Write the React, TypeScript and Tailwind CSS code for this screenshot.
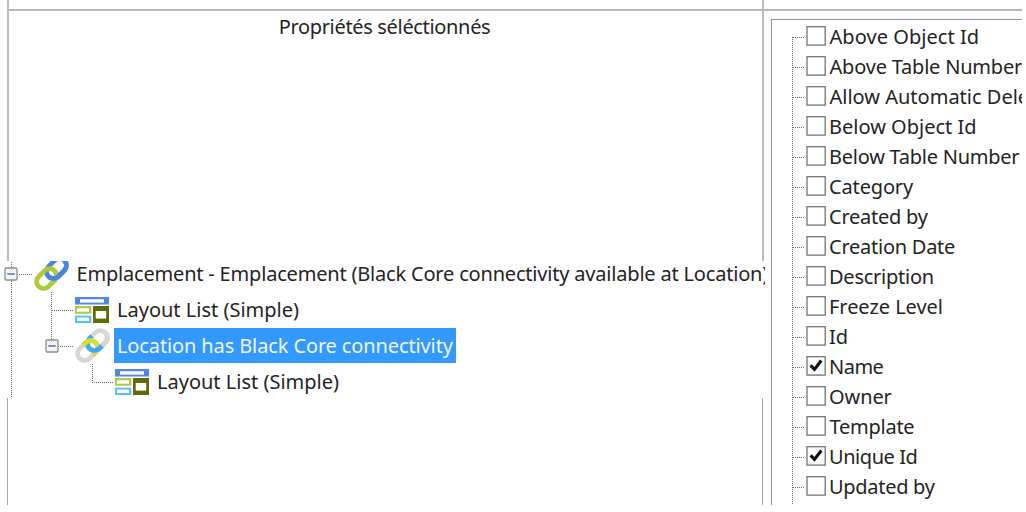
import type { ReactNode } from "react";

type Segment = [number, number, number, number];

function Dots({ width, height, lines }: { width: number; height: number; lines: Segment[] }) {
  return (
    <svg width={width} height={height} className="block shrink-0" fill="none" stroke="#6c6c6c" strokeDasharray="1 1">
      {lines.map(([x1, y1, x2, y2], i) => (
        <path key={i} d={`M${x1} ${y1}L${x2} ${y2}`} />
      ))}
    </svg>
  );
}

function Expander() {
  return (
    <svg width="14" height="14" viewBox="0 0 14 14" className="block shrink-0">
      <rect x="1" y="1" width="12" height="12" rx="1.2" fill="#f4f4f4" stroke="#8c8c8c" strokeWidth="1.3" />
      <path d="M3.3 7h7.4" stroke="#4262b4" strokeWidth="1.4" />
    </svg>
  );
}

const LOWER = "rotate(-45 12.6 22.6)";
const UPPER = "rotate(-45 22.4 12.6)";

function LowerLink({ color, clip }: { color: string; clip?: string }) {
  return (
    <g clipPath={clip}>
      <rect x="1.35" y="15.6" width="22.5" height="14" rx="7" transform={LOWER} fill="none" stroke={color} strokeWidth="4.8" />
    </g>
  );
}

function UpperLink({ color, clip }: { color: string; clip?: string }) {
  return (
    <g clipPath={clip}>
      <rect x="11.15" y="5.6" width="22.5" height="14" rx="7" transform={UPPER} fill="none" stroke={color} strokeWidth="4.8" />
    </g>
  );
}

function LinkIcon() {
  return (
    <svg width="36" height="36" viewBox="0 0 36 36" className="block shrink-0">
      <clipPath id="link-front">
        <path d="M36 0V36H0Z" />
      </clipPath>
      <UpperLink color="#4a86e0" />
      <LowerLink color="#aecb3c" />
      <UpperLink color="#4a86e0" clip="url(#link-front)" />
    </svg>
  );
}

function MutedLinkIcon() {
  return (
    <svg width="36" height="36" viewBox="0 0 36 36" className="block shrink-0">
      <clipPath id="muted-upper">
        <path d="M-20 -29L45 36H-20Z" />
      </clipPath>
      <clipPath id="muted-lower">
        <path d="M-9 0L27 36H50V-10H-9Z" />
      </clipPath>
      <clipPath id="muted-front">
        <path d="M36 0V36H0Z" />
      </clipPath>
      <UpperLink color="#d6d6d6" />
      <UpperLink color="#3fa9f5" clip="url(#muted-upper)" />
      <LowerLink color="#d6d6d6" />
      <LowerLink color="#cfe22c" clip="url(#muted-lower)" />
      <g clipPath="url(#muted-front)">
        <UpperLink color="#d6d6d6" />
        <UpperLink color="#3fa9f5" clip="url(#muted-upper)" />
      </g>
    </svg>
  );
}

function LayoutIcon() {
  return (
    <svg width="36" height="36" viewBox="0 0 36 36" className="block shrink-0">
      <path fill="#4f86df" d="M0 5h34v7.6H0z" />
      <path fill="#fff" d="M5 7.2h24v3.4H5z" />
      <path fill="#b0cb48" d="M0 14h16.3v7.8H0z" />
      <path fill="#fff" d="M2 16.3h12v3.4H2z" />
      <path fill="#56c3f8" d="M0 23.6h16.3V31H0z" />
      <path fill="#fff" d="M2 25.6h12V29H2z" />
      <path fill="#626a08" d="M18 14h16v17H18z" />
      <path fill="#fff" d="M20.7 19h10.5v7.6H20.7z" />
    </svg>
  );
}

function TreeRow({ children }: { children: ReactNode }) {
  return <div className="flex h-9 shrink-0 items-center whitespace-nowrap">{children}</div>;
}

function CheckBox({ checked }: { checked: boolean }) {
  return (
    <svg width="20" height="20" viewBox="0 0 20 20" className="block shrink-0">
      <rect x="1" y="0.7" width="18.2" height="18.4" fill="#fff" stroke="#747474" strokeWidth="1.3" />
      {checked && <path d="M4.6 9.4L8.5 13.4L15.3 4.6" fill="none" stroke="#111" strokeWidth="3.2" />}
    </svg>
  );
}

const properties = [
  { label: "Above Object Id", text: "ml-[3.5px] tracking-[0.05px]" },
  { label: "Above Table Number", text: "ml-[3.5px] tracking-[-0.2px]" },
  { label: "Allow Automatic Delete", text: "ml-[3.5px]" },
  { label: "Below Object Id", text: "ml-[3px]" },
  { label: "Below Table Number", text: "ml-[3px] tracking-[-0.25px]" },
  { label: "Category", text: "ml-[3px] tracking-[-0.15px]" },
  { label: "Created by", text: "ml-[3px] tracking-[-0.25px]" },
  { label: "Creation Date", text: "ml-[3px] tracking-[-0.25px]" },
  { label: "Description", text: "ml-[3px] tracking-[-0.25px]" },
  { label: "Freeze Level", text: "ml-[3px] tracking-[-0.05px]" },
  { label: "Id", text: "ml-[3px]" },
  { label: "Name", text: "ml-[3px] tracking-[-0.5px]", checked: true },
  { label: "Owner", text: "ml-[3px] tracking-[-0.1px]" },
  { label: "Template", text: "ml-[3.5px] tracking-[-0.25px]" },
  { label: "Unique Id", text: "ml-[3px] tracking-[-0.45px]", checked: true },
  { label: "Updated by", text: "ml-[3px] tracking-[-0.3px]" },
];

export default function App() {
  return (
    <div className="h-[512px] w-[1026px] overflow-hidden bg-white font-['Noto_Sans',sans-serif] text-[20px] text-[#242424]">
      <div className="flex h-[505px] w-[1022px] overflow-hidden">
        <div className="flex w-[764px] shrink-0 flex-col">
          <div className="ml-[7px] flex h-[261px] w-[757px] shrink-0 flex-col border-x-2 border-[#bcbcbc]">
            <div className="h-[11px] shrink-0 border-b-2 border-[#b6b6b6]" />
            <div className="flex justify-center pt-[2px] pr-[2px] leading-[28px] tracking-[-0.33px]">
              Propriétés séléctionnés
            </div>
          </div>

          <div className="flex h-[137px] w-[765px] shrink-0 flex-col justify-center overflow-hidden">
            <div className="-mt-[3px] flex flex-col">
              <TreeRow>
                <div className="flex items-center">
                  <div className="flex flex-col items-start">
                    <Dots width={18} height={11} lines={[[11.5, 0, 11.5, 11]]} />
                    <div className="pl-[4px]"><Expander /></div>
                    <Dots width={18} height={11} lines={[[11.5, 0, 11.5, 11]]} />
                  </div>
                  <Dots width={16} height={36} lines={[[1, 18.5, 15, 18.5]]} />
                </div>
                <LinkIcon />
                <span className="pb-[1px] pl-[6.5px] tracking-[-0.19px]">
                  Emplacement - Emplacement (Black Core connectivity available at Location)
                </span>
              </TreeRow>
              <TreeRow>
                <Dots width={75} height={36} lines={[[11.5, 0, 11.5, 36], [51.5, 0, 51.5, 36], [52, 18.5, 74, 18.5]]} />
                <LayoutIcon />
                <span className="pb-[1px] pl-[6px]">Layout List (Simple)</span>
              </TreeRow>
              <TreeRow>
                <Dots width={44} height={36} lines={[[11.5, 0, 11.5, 36]]} />
                <div className="flex flex-col items-center">
                  <Dots width={15} height={11} lines={[[7.5, 0, 7.5, 11]]} />
                  <Expander />
                  <div className="h-[11px]" />
                </div>
                <Dots width={16} height={36} lines={[[1, 18.5, 15, 18.5]]} />
                <MutedLinkIcon />
                <div className="ml-[3px] flex h-9 w-[342px] items-start">
                  <span className="h-[35px] w-full bg-[#3399ff] pl-[3px] leading-[36px] tracking-[-0.12px] text-[#f0f7ff]">
                    Location has Black Core connectivity
                  </span>
                </div>
              </TreeRow>
              <TreeRow>
                <Dots width={115} height={36} lines={[[11.5, 0, 11.5, 36], [92.5, 0, 92.5, 18], [92, 18.5, 114, 18.5]]} />
                <LayoutIcon />
                <span className="pb-[1px] pl-[6px]">Layout List (Simple)</span>
              </TreeRow>
            </div>
          </div>

          <div className="ml-[7px] w-[756px] grow border-x border-[#a6a6a6]" />
        </div>

        <div className="flex w-[258px] shrink-0 flex-col overflow-hidden">
          <div className="h-[11px] shrink-0 border-b-2 border-[#b6b6b6]" />
          <div className="mt-[8px] ml-[7px] grow overflow-hidden border-t border-l border-[#8d92a0] pt-[1px]">
            {properties.map(({ label, text, checked }, i) => (
              <div key={label} className="flex h-[30px] items-center whitespace-nowrap">
                <Dots width={34} height={30} lines={[[20.5, i === 0 ? 16 : 0, 20.5, 30], [21, 16.5, 33, 16.5]]} />
                <CheckBox checked={!!checked} />
                <span className={`pt-[2px] leading-[30px] ${text}`}>{label}</span>
              </div>
            ))}
            <Dots width={34} height={4} lines={[[20.5, 0, 20.5, 4]]} />
          </div>
        </div>
      </div>
    </div>
  );
}
